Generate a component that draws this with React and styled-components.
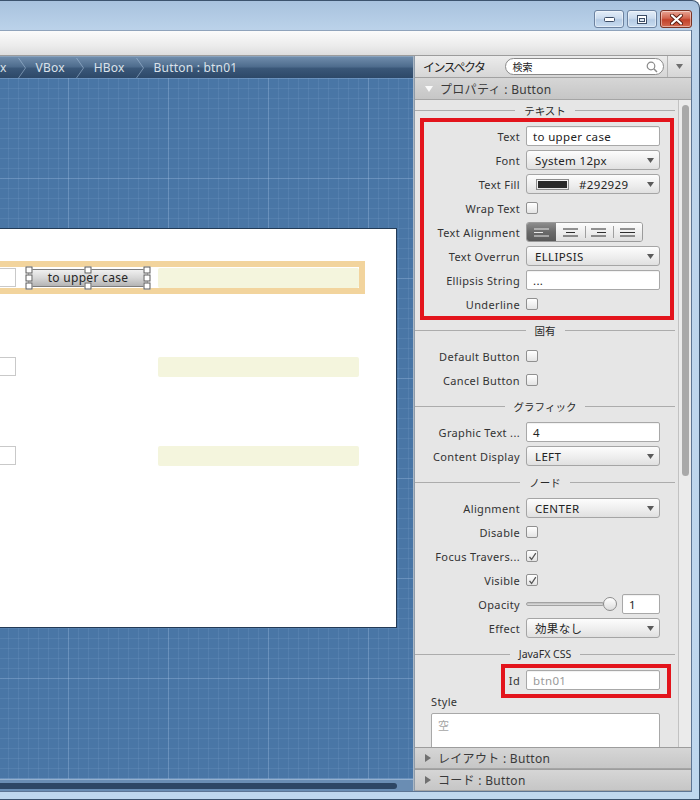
import React from "react";
import styled, { createGlobalStyle } from "styled-components";

const UI = `"Noto Sans", "Noto Sans CJK JP", sans-serif`;

const GlobalStyle = createGlobalStyle`
  html, body {
    margin: 0;
    padding: 0;
  }
  body {
    width: 700px;
    height: 800px;
    overflow: hidden;
    font-family: ${UI};
  }
`;

const Window = styled.div`
  width: 700px;
  height: 800px;
  box-sizing: border-box;
  display: flex;
  flex-direction: column;
  background: linear-gradient(180deg, #a8c2de 0px, #bcd3ea 30px, #bfd7ee 100%);
  border-top: 1px solid #3c536e;
  border-right: 1px solid #3c536e;
  border-bottom: 1px solid #3c536e;
  border-top-right-radius: 8px;
  overflow: hidden;
`;

const TitleBar = styled.div`
  height: 29px;
  flex-shrink: 0;
  display: flex;
  justify-content: flex-end;
  align-items: flex-start;
  gap: 3px;
  padding: 9px 7px 0 0;
  box-sizing: border-box;
`;

const CaptionButton = styled.div`
  width: ${(p) => p.$w}px;
  height: 18px;
  box-sizing: border-box;
  border: 1px solid ${(p) => (p.$close ? "#7a3223" : "#6c82a0")};
  border-radius: 3px;
  display: flex;
  align-items: center;
  justify-content: center;
  background: ${(p) =>
    p.$close
      ? "linear-gradient(180deg, #e9a595 0%, #d2654f 45%, #c2412a 55%, #d46a50 100%)"
      : "linear-gradient(180deg, #e3edf8 0%, #cbdbee 45%, #b5cbe4 55%, #c9dcf0 100%)"};
  box-shadow: inset 0 0 0 1px rgba(255, 255, 255, 0.45);
`;

const Client = styled.div`
  flex: 1;
  min-height: 0;
  margin: 0 7px 7px 0;
  display: flex;
  flex-direction: column;
  border-right: 1px solid #5d7594;
  border-bottom: 1px solid #5d7594;
`;

const Toolbar = styled.div`
  height: 26px;
  flex-shrink: 0;
  box-sizing: border-box;
  background: linear-gradient(180deg, #fbfbfb 0%, #ececec 60%, #dedede 100%);
  border-top: 1px solid #8fa3bb;
  border-bottom: 1px solid #9c9c9c;
`;

const Main = styled.div`
  flex: 1;
  min-height: 0;
  display: flex;
`;

const LeftPane = styled.div`
  width: 413px;
  flex-shrink: 0;
  display: flex;
  flex-direction: column;
`;

const Divider = styled.div`
  width: 2px;
  flex-shrink: 0;
  background: linear-gradient(90deg, #b9c6d4, #7f8c9a);
`;

const Breadcrumb = styled.div`
  height: 22px;
  flex-shrink: 0;
  box-sizing: border-box;
  display: flex;
  align-items: center;
  background: linear-gradient(180deg, #6f8cab 0%, #4f6d8e 45%, #3a5778 55%, #2d4868 100%);
  border-top: 1px solid #8aa3bd;
  color: #dbe2ea;
  font-size: 12px;
  letter-spacing: 0.2px;
  white-space: nowrap;
  overflow: hidden;
`;

const Crumb = styled.span`
  line-height: 22px;
`;

const Chevron = styled.svg`
  width: 8px;
  height: 20px;
  margin: 0 10px 0 11px;
  flex-shrink: 0;
`;

const Canvas = styled.div`
  flex: 1;
  min-height: 0;
  overflow: hidden;
  padding-top: 150px;
  box-sizing: border-box;
  background-color: #4976a6;
  background-image: linear-gradient(rgba(180, 208, 238, 0.22) 1px, transparent 1px),
    linear-gradient(90deg, rgba(180, 208, 238, 0.22) 1px, transparent 1px),
    linear-gradient(rgba(170, 200, 235, 0.11) 1px, transparent 1px),
    linear-gradient(90deg, rgba(170, 200, 235, 0.11) 1px, transparent 1px);
  background-size: 100px 100px, 100px 100px, 10px 10px, 10px 10px;
  background-position: 0 0, 68px 0, 0 0, 8px 0;
`;

const Stage = styled.div`
  width: 397px;
  height: 400px;
  box-sizing: border-box;
  background: #fff;
  border: 1px solid #223a56;
  border-left: none;
  padding-top: 32px;
  display: flex;
  flex-direction: column;
  gap: 56px;
`;

const HBox = styled.div`
  width: 365px;
  height: 33px;
  box-sizing: border-box;
  display: flex;
  align-items: center;
  border: 6px solid ${(p) => (p.$selected ? "#f2d49d" : "transparent")};
  border-left: none;
`;

const CanvasField = styled.div`
  width: 16px;
  height: 19px;
  box-sizing: border-box;
  flex-shrink: 0;
  margin-right: 12px;
  background: #fff;
  border: 1px solid #c9c9c9;
  border-left: none;
`;

const FxButton = styled.div`
  position: relative;
  width: 120px;
  height: 18px;
  flex-shrink: 0;
  margin-right: 10px;
  box-sizing: border-box;
  border: 1px solid #7e7e7e;
  border-radius: 2px;
  background: linear-gradient(180deg, #f0f0f0 0%, #d6d6d6 50%, #b4b4b4 100%);
  font-size: 12px;
  letter-spacing: 0.3px;
  color: #262626;
  display: flex;
  align-items: center;
  justify-content: center;
  visibility: ${(p) => (p.$ghost ? "hidden" : "visible")};
`;

const Handle = styled.span`
  position: absolute;
  left: ${(p) => p.$x};
  top: ${(p) => p.$y};
  width: 7px;
  height: 7px;
  box-sizing: border-box;
  transform: translate(-50%, -50%);
  background: #fff;
  border: 1px solid #5a5a5a;
`;

const Cream = styled.div`
  flex: 1;
  height: 20px;
  border-radius: 2px;
  background: #f4f5dd;
`;

const HScroll = styled.div`
  height: 12px;
  flex-shrink: 0;
  box-sizing: border-box;
  display: flex;
  align-items: center;
  background: #6a8db3;
  border-top: 1px solid #93b0cf;
`;

const HThumb = styled.div`
  width: 397px;
  height: 6px;
  border-radius: 0 3px 3px 0;
  background: #2d4664;
`;

const RightPane = styled.div`
  flex: 1;
  min-width: 0;
  display: flex;
  flex-direction: column;
  background: #e6e6e6;
  color: #333;
`;

const InspectorHeader = styled.div`
  height: 22px;
  flex-shrink: 0;
  box-sizing: border-box;
  display: flex;
  align-items: center;
  padding-left: 8px;
  background: linear-gradient(180deg, #ececec 0%, #d6d6d6 100%);
  border-bottom: 1px solid #a2a2a2;
  font-size: 11px;
`;

const HeaderTitle = styled.span`
  color: #222;
  font-size: 12px;
  letter-spacing: -1.5px;
  margin-right: 21px;
`;

const SearchBox = styled.div`
  width: 159px;
  height: 17px;
  box-sizing: border-box;
  border: 1px solid #8a8a8a;
  border-radius: 9px;
  background: #fff;
  display: flex;
  align-items: center;
  justify-content: space-between;
  padding: 0 5px 0 6px;
  font-size: 10px;
  color: #222;
`;

const MenuButton = styled.div`
  margin-left: auto;
  width: 24px;
  height: 100%;
  box-sizing: border-box;
  border-left: 1px solid #b4b4b4;
  display: flex;
  align-items: center;
  justify-content: center;
`;

const PaneHeader = styled.div`
  height: 22px;
  flex-shrink: 0;
  box-sizing: border-box;
  display: flex;
  align-items: center;
  gap: 7px;
  padding-left: 10px;
  background: linear-gradient(180deg, #d6d6d6 0%, #c6c6c6 100%);
  border-top: ${(p) => (p.$collapsed ? "1px solid #9d9d9d" : "none")};
  border-bottom: 1px solid #a5a5a5;
  font-size: 12px;
  letter-spacing: 0.3px;
  color: #3a3a3a;
`;

const Body = styled.div`
  flex: 1;
  min-height: 0;
  display: flex;
  overflow: hidden;
`;

const Sheet = styled.div`
  flex: 1;
  min-width: 0;
  overflow: hidden;
  font-size: 11px;
  letter-spacing: 0.35px;
`;

const VScroll = styled.div`
  width: 13px;
  flex-shrink: 0;
  box-sizing: border-box;
  border-left: 1px solid #c2c2c2;
  background: #ebebeb;
  padding: 5px 0 0 3px;
`;

const VThumb = styled.div`
  width: 7px;
  height: 371px;
  border-radius: 4px;
  background: #a9a9a9;
`;

const SectionTitle = styled.div`
  height: 28px;
  margin-top: ${(p) => (p.$first ? "-4px" : "0")};
  display: flex;
  align-items: center;
  gap: 9px;
  padding-right: 3px;
  color: #2a2a2a;
  font-size: 10.5px;
  letter-spacing: 0;

  &::before,
  &::after {
    content: "";
    flex: 1;
    height: 1px;
    background: #acacac;
  }
`;

const Group = styled.div`
  position: relative;

  &::after {
    content: "";
    position: absolute;
    inset: ${(p) => p.$box};
    border: 4px solid #e3141c;
    pointer-events: none;
  }
`;

const Row = styled.div`
  height: 24px;
  display: grid;
  grid-template-columns: 105px 134px;
  column-gap: 6px;
  align-items: center;
`;

const Label = styled.span`
  text-align: right;
  white-space: nowrap;
  color: #333;
`;

const Field = styled.div`
  width: ${(p) => p.$w || "100%"};
  height: 20px;
  box-sizing: border-box;
  border: 1px solid #a8a8a8;
  border-radius: 2px;
  background: #fff;
  display: flex;
  align-items: center;
  padding: 0 6px;
  color: ${(p) => (p.$muted ? "#9a9a9a" : "#222")};
  font-size: 11.5px;
  box-shadow: inset 0 1px 1px rgba(0, 0, 0, 0.06);
`;

const Combo = styled.div`
  height: 20px;
  box-sizing: border-box;
  border: 1px solid #a5a5a5;
  border-radius: 3px;
  background: linear-gradient(180deg, #fdfdfd 0%, #eeeeee 55%, #e0e0e0 100%);
  display: flex;
  align-items: center;
  padding: 0 5px 0 8px;
  color: #222;
  font-size: 11.5px;

  & > svg {
    margin-left: auto;
  }
`;

const Swatch = styled.span`
  width: 33px;
  height: 11px;
  box-sizing: border-box;
  margin: 0 10px 0 1px;
  padding: 1px;
  border: 1px solid #8c8c8c;
  background-color: #fff;
  background-image: linear-gradient(#292929, #292929);
  background-clip: content-box;
  background-origin: content-box;
`;

const Check = styled.span`
  width: 12px;
  height: 12px;
  box-sizing: border-box;
  border: 1px solid #909090;
  border-radius: 2px;
  background: linear-gradient(180deg, #ffffff 0%, #e4e4e4 100%);
  display: flex;
  align-items: center;
  justify-content: center;
`;

const Segmented = styled.div`
  width: 117px;
  height: 20px;
  box-sizing: border-box;
  display: flex;
  border: 1px solid #9b9b9b;
  border-radius: 3px;
  overflow: hidden;
`;

const Segment = styled.div`
  flex: 1;
  display: flex;
  align-items: center;
  justify-content: center;
  background: ${(p) =>
    p.$on
      ? "linear-gradient(180deg, #8d8d8d 0%, #6a6a6a 50%, #5a5a5a 100%)"
      : "linear-gradient(180deg, #fdfdfd 0%, #ededed 55%, #dfdfdf 100%)"};
  position: relative;

  & + &::before {
    content: "";
    position: absolute;
    left: 0;
    top: 3px;
    bottom: 3px;
    width: 1px;
    background: #9f9f9f;
  }
`;

const Slider = styled.div`
  display: flex;
  align-items: center;
`;

const Track = styled.div`
  width: 78px;
  height: 4px;
  box-sizing: border-box;
  border: 1px solid #a2a2a2;
  border-radius: 2px;
  background: linear-gradient(180deg, #bdbdbd, #dedede);
`;

const Knob = styled.div`
  width: 14px;
  height: 14px;
  box-sizing: border-box;
  margin-left: -1px;
  margin-right: 5px;
  border-radius: 50%;
  border: 1px solid #8c8c8c;
  background: linear-gradient(180deg, #ffffff, #dcdcdc);
`;

const StyleLabel = styled.div`
  height: 18px;
  display: flex;
  align-items: center;
  padding-left: 16px;
`;

const TextArea = styled.div`
  width: 229px;
  height: 50px;
  margin: 3px 0 0 16px;
  box-sizing: border-box;
  border: 1px solid #a8a8a8;
  border-radius: 2px;
  background: #fff;
  padding: 3px 6px;
  color: #a5a5a5;
`;

const Caret = () => (
  <svg width="7" height="5" viewBox="0 0 7 5">
    <polygon points="0,0 7,0 3.5,5" fill="#5a5a5a" />
  </svg>
);

const Tick = () => (
  <svg width="9" height="9" viewBox="0 0 9 9">
    <path d="M1.5 4.8 L3.6 7.5 L7.8 1.2" fill="none" stroke="#555" strokeWidth="1.3" />
  </svg>
);

const AlignIcon = ({ kind, on }) => {
  const c = on ? "#e8e8e8" : "#2e2e2e";
  const lens = kind === "justify" ? [15, 15, 15] : [15, 9, 15];
  const x = (len) =>
    kind === "center" ? (15 - len) / 2 : kind === "right" ? 15 - len : 0;
  return (
    <svg width="15" height="9" viewBox="0 0 15 9">
      {lens.map((len, i) => (
        <line key={i} x1={x(len)} x2={x(len) + len} y1={1 + i * 3.5} y2={1 + i * 3.5} stroke={c} strokeWidth="1.2" />
      ))}
    </svg>
  );
};

const Prop = ({ label, children }) => (
  <Row>
    <Label>{label}</Label>
    <div>{children}</div>
  </Row>
);

const ChevronMark = () => (
  <Chevron viewBox="0 0 8 20">
    <polyline points="0.5,0 7.5,10 0.5,20" fill="none" stroke="rgba(170,195,220,0.55)" strokeWidth="1" />
  </Chevron>
);

const handles = [
  ["0%", "0%"], ["50%", "0%"], ["100%", "0%"],
  ["0%", "50%"], ["100%", "50%"],
  ["0%", "100%"], ["50%", "100%"], ["100%", "100%"],
];

export default function App() {
  return (
    <>
      <GlobalStyle />
      <Window>
        <TitleBar>
          <CaptionButton $w={30}>
            <svg width="11" height="5" viewBox="0 0 11 5">
              <rect x="0.5" y="0.5" width="10" height="4" rx="1" fill="#fff" stroke="#3c4d66" />
            </svg>
          </CaptionButton>
          <CaptionButton $w={30}>
            <svg width="10" height="9" viewBox="0 0 10 9">
              <rect x="0.5" y="0.5" width="9" height="8" fill="#fff" stroke="#3c4d66" />
              <rect x="2.5" y="3.5" width="5" height="3" fill="#dfe8f2" stroke="#3c4d66" />
            </svg>
          </CaptionButton>
          <CaptionButton $w={32} $close>
            <svg width="13" height="11" viewBox="0 0 13 11">
              <path d="M2 1.5 L11 9.5 M11 1.5 L2 9.5" stroke="#5a1d12" strokeWidth="4" strokeLinecap="round" />
              <path d="M2 1.5 L11 9.5 M11 1.5 L2 9.5" stroke="#fff" strokeWidth="2.2" strokeLinecap="round" />
            </svg>
          </CaptionButton>
        </TitleBar>

        <Client>
          <Toolbar />
          <Main>
            <LeftPane>
              <Breadcrumb>
                <Crumb>x</Crumb>
                <ChevronMark />
                <Crumb>VBox</Crumb>
                <ChevronMark />
                <Crumb>HBox</Crumb>
                <ChevronMark />
                <Crumb>Button : btn01</Crumb>
              </Breadcrumb>

              <Canvas>
                <Stage>
                  <HBox $selected>
                    <CanvasField />
                    <FxButton>
                      to upper case
                      {handles.map(([x, y]) => (
                        <Handle key={x + y} $x={x} $y={y} />
                      ))}
                    </FxButton>
                    <Cream />
                  </HBox>
                  <HBox>
                    <CanvasField />
                    <FxButton $ghost />
                    <Cream />
                  </HBox>
                  <HBox>
                    <CanvasField />
                    <FxButton $ghost />
                    <Cream />
                  </HBox>
                </Stage>
              </Canvas>

              <HScroll>
                <HThumb />
              </HScroll>
            </LeftPane>

            <Divider />

            <RightPane>
              <InspectorHeader>
                <HeaderTitle>インスペクタ</HeaderTitle>
                <SearchBox>
                  <span>検索</span>
                  <svg width="12" height="12" viewBox="0 0 12 12">
                    <circle cx="5" cy="5" r="3.8" fill="none" stroke="#8a8a8a" strokeWidth="1.2" />
                    <line x1="7.8" y1="7.8" x2="11" y2="11" stroke="#8a8a8a" strokeWidth="1.5" />
                  </svg>
                </SearchBox>
                <MenuButton>
                  <svg width="7" height="5" viewBox="0 0 7 5">
                    <polygon points="0,0 7,0 3.5,5" fill="#6f6f6f" />
                  </svg>
                </MenuButton>
              </InspectorHeader>

              <PaneHeader>
                <svg width="8" height="6" viewBox="0 0 8 6">
                  <polygon points="0,0 8,0 4,6" fill="#fafafa" />
                </svg>
                <span>プロパティ : Button</span>
              </PaneHeader>

              <Body>
                <Sheet>
                  <SectionTitle $first>テキスト</SectionTitle>
                  <Group $box="-6px 4px -4px 5px">
                    <Prop label="Text">
                      <Field>to upper case</Field>
                    </Prop>
                    <Prop label="Font">
                      <Combo>System 12px<Caret /></Combo>
                    </Prop>
                    <Prop label="Text Fill">
                      <Combo>
                        <Swatch />
                        #292929
                        <Caret />
                      </Combo>
                    </Prop>
                    <Prop label="Wrap Text">
                      <Check />
                    </Prop>
                    <Prop label="Text Alignment">
                      <Segmented>
                        <Segment $on><AlignIcon kind="left" on /></Segment>
                        <Segment><AlignIcon kind="center" /></Segment>
                        <Segment><AlignIcon kind="right" /></Segment>
                        <Segment><AlignIcon kind="justify" /></Segment>
                      </Segmented>
                    </Prop>
                    <Prop label="Text Overrun">
                      <Combo>ELLIPSIS<Caret /></Combo>
                    </Prop>
                    <Prop label="Ellipsis String">
                      <Field>...</Field>
                    </Prop>
                    <Prop label="Underline">
                      <Check />
                    </Prop>
                  </Group>

                  <SectionTitle>固有</SectionTitle>
                  <Prop label="Default Button">
                    <Check />
                  </Prop>
                  <Prop label="Cancel Button">
                    <Check />
                  </Prop>

                  <SectionTitle>グラフィック</SectionTitle>
                  <Prop label="Graphic Text ...">
                    <Field>4</Field>
                  </Prop>
                  <Prop label="Content Display">
                    <Combo>LEFT<Caret /></Combo>
                  </Prop>

                  <SectionTitle>ノード</SectionTitle>
                  <Prop label="Alignment">
                    <Combo>CENTER<Caret /></Combo>
                  </Prop>
                  <Prop label="Disable">
                    <Check />
                  </Prop>
                  <Prop label="Focus Travers...">
                    <Check><Tick /></Check>
                  </Prop>
                  <Prop label="Visible">
                    <Check><Tick /></Check>
                  </Prop>
                  <Prop label="Opacity">
                    <Slider>
                      <Track />
                      <Knob />
                      <Field $w="38px">1</Field>
                    </Slider>
                  </Prop>
                  <Prop label="Effect">
                    <Combo>効果なし<Caret /></Combo>
                  </Prop>

                  <SectionTitle>JavaFX CSS</SectionTitle>
                  <Group $box="-4px 7px -6px 86px">
                    <Prop label="Id">
                      <Field $muted>btn01</Field>
                    </Prop>
                  </Group>
                  <StyleLabel>Style</StyleLabel>
                  <TextArea>空</TextArea>
                </Sheet>
                <VScroll>
                  <VThumb />
                </VScroll>
              </Body>

              <PaneHeader $collapsed>
                <svg width="6" height="8" viewBox="0 0 6 8">
                  <polygon points="0,0 6,4 0,8" fill="#707070" />
                </svg>
                <span>レイアウト : Button</span>
              </PaneHeader>
              <PaneHeader $collapsed>
                <svg width="6" height="8" viewBox="0 0 6 8">
                  <polygon points="0,0 6,4 0,8" fill="#707070" />
                </svg>
                <span>コード : Button</span>
              </PaneHeader>
            </RightPane>
          </Main>
        </Client>
      </Window>
    </>
  );
}
